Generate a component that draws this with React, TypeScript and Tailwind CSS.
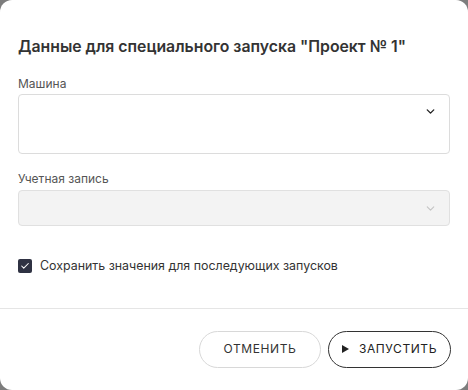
import { ChevronDown, Check } from "lucide-react";

const App = () => {
  return (
    <div
      className="w-[468px] h-[390px] bg-[#7d7d7d]"
      style={{ fontFamily: "Inter, 'Noto Sans', sans-serif" }}
    >
      <div className="w-full h-full bg-white rounded-[12px] flex flex-col">
        <div className="px-[18px] pt-[36px] flex-1">
          <h2 className="text-[15.8px] leading-[22px] font-semibold text-[#333]">
            Данные для специального запуска "Проект № 1"
          </h2>

          {/* Машина */}
          <label className="block mt-[18px] text-[12px] leading-[16px] text-[#555]">
            Машина
          </label>
          <div className="mt-[2px] h-[60px] border border-[#dcdcdc] rounded-[4px] bg-white flex justify-end items-start pt-[10px] pr-[12px]">
            <ChevronDown className="w-[13px] h-[13px] text-[#222]" strokeWidth={2.5} />
          </div>

          {/* Учетная запись */}
          <label className="block mt-[17px] text-[12px] leading-[16px] text-[#555]">
            Учетная запись
          </label>
          <div className="mt-[3px] h-[36px] border border-[#e0e0e0] rounded-[4px] bg-[#f3f3f3] flex justify-end items-center pr-[12px]">
            <ChevronDown className="w-[13px] h-[13px] text-[#c4c4c4]" strokeWidth={2} />
          </div>

          <div className="mt-[32px] flex items-center gap-[8px]">
            <span className="w-[14px] h-[14px] rounded-[2px] bg-[#2f3243] flex items-center justify-center">
              <Check className="w-[10px] h-[10px] text-white" strokeWidth={2.5} />
            </span>
            <span className="text-[12.4px] leading-[16px] text-[#333]">
              Сохранить значения для последующих запусков
            </span>
          </div>
        </div>

        <div className="border-t border-[#e5e5e5] h-[82px] flex items-center justify-end gap-[7px] pr-[17px] pb-[1px]">
          <button className="w-[122px] h-[37px] rounded-full border border-[#d8d8d8] text-[12px] font-normal tracking-[0.6px] text-[#333]">
            ОТМЕНИТЬ
          </button>
          <button className="w-[123px] h-[37px] rounded-full border border-[#333] text-[12px] font-normal tracking-[0.6px] text-[#222] flex items-center justify-center gap-[10px]">
            <svg width="7" height="8" viewBox="0 0 7 8">
              <path d="M0 0 L7 4 L0 8 Z" fill="#222" />
            </svg>
            ЗАПУСТИТЬ
          </button>
        </div>
      </div>
    </div>
  );
};

export default App;
